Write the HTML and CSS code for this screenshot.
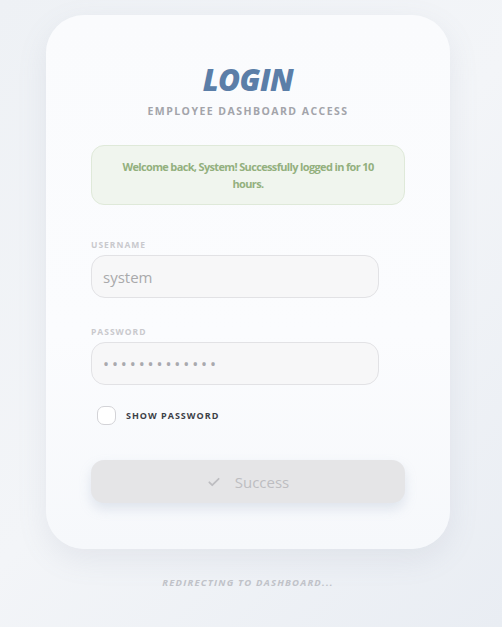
FILE: index.html
```html
<!DOCTYPE html>
<html lang="en">
<head>
    <meta charset="UTF-8">
    <meta name="viewport" content="width=device-width, initial-scale=1.0">
    <title>Login</title>
    <link rel="stylesheet" href="styles.css">
</head>
<body>
    <div class="login-card">
        <h1 class="title">LOGIN</h1>
        <div class="subtitle">EMPLOYEE DASHBOARD ACCESS</div>

        <div class="alert-success">
            Welcome back, System! Successfully logged in for 10 hours.
        </div>

        <div class="field">
            <label class="field-label" for="username">USERNAME</label>
            <input class="field-input" id="username" type="text" value="system">
        </div>

        <div class="field">
            <label class="field-label" for="password">PASSWORD</label>
            <input class="field-input password" id="password" type="password" value="system1234567">
        </div>

        <label class="show-password">
            <span class="checkbox"></span>
            SHOW PASSWORD
        </label>

        <button class="submit-button" disabled>
            <svg class="check-icon" width="14" height="14" viewBox="0 0 24 24">
                <path d="M4 12.5l5 5L20 6.5" fill="none" stroke="currentColor" stroke-width="3" stroke-linecap="round" stroke-linejoin="round"/>
            </svg>
            Success
        </button>
    </div>

    <div class="redirect-note">REDIRECTING TO DASHBOARD...</div>
</body>
</html>
```

FILE: styles.css
```css
body {
    margin: 0;
    min-height: 627px;
    font-family: "Open Sans", Arial, sans-serif;
    background: linear-gradient(135deg, #eef1f5 0%, #f3f5f8 50%, #e9edf3 100%);
    display: flex;
    flex-direction: column;
    align-items: center;
}

.login-card {
    width: 404px;
    box-sizing: border-box;
    margin-top: 15px;
    margin-left: -6px;
    padding: 52px 45px 46px;
    background: linear-gradient(180deg, #fafbfd 0%, #fbfcfe 60%, #f6f8fb 100%);
    border-radius: 38px;
    box-shadow: 0 10px 30px rgba(120, 135, 160, 0.12);
}

.title {
    margin: 0;
    text-align: center;
    font-size: 30px;
    font-weight: 800;
    font-style: italic;
    letter-spacing: -0.5px;
    line-height: 26px;
    color: #5b7ea8;
}

.subtitle {
    margin-top: 11px;
    text-align: center;
    font-size: 10.5px;
    font-weight: 700;
    letter-spacing: 1.45px;
    color: #a3a4aa;
}

.alert-success {
    margin-top: 27px;
    height: 60px;
    box-sizing: border-box;
    padding: 12px 20px;
    background: #f0f5ee;
    border: 1px solid #dfe9d9;
    border-radius: 13px;
    text-align: center;
    font-size: 11px;
    font-weight: 700;
    line-height: 17px;
    letter-spacing: -0.65px;
    color: #93b07e;
}

.field {
    margin-top: 34px;
}

.field + .field {
    margin-top: 28px;
}

.field-label {
    display: block;
    font-size: 8.5px;
    font-weight: 700;
    letter-spacing: 1px;
    color: #c9c9cd;
    margin-bottom: 5px;
}

.field-input {
    width: 288px;
    height: 43px;
    box-sizing: border-box;
    padding: 0 11px;
    font-family: "Open Sans", Arial, sans-serif;
    font-size: 15px;
    color: #a9a9ab;
    background: #f7f7f8;
    border: 1px solid #e2e2e5;
    border-radius: 14px;
    outline: none;
}

.field-input.password {
    font-size: 16px;
    letter-spacing: 2.9px;
    color: #a9a9ae;
}

.show-password {
    display: flex;
    align-items: center;
    gap: 10px;
    margin-top: 21px;
    margin-left: 6px;
    font-size: 9px;
    font-weight: 700;
    letter-spacing: 1px;
    color: #3c3f47;
}

.checkbox {
    width: 17px;
    height: 17px;
    border: 1px solid #d3d3d7;
    border-radius: 7px;
    background: #fff;
}

.submit-button {
    display: flex;
    align-items: center;
    justify-content: center;
    gap: 14px;
    width: 100%;
    height: 43px;
    margin-top: 35px;
    border: none;
    border-radius: 13px;
    background: #e5e5e7;
    box-shadow: 0 6px 12px rgba(160, 175, 200, 0.28);
    font-family: "Open Sans", Arial, sans-serif;
    font-size: 15px;
    color: #bdbdc1;
}

.check-icon {
    color: #bdbdc1;
}

.redirect-note {
    margin-top: 27px;
    margin-left: -6px;
    font-size: 9.5px;
    font-weight: 700;
    font-style: italic;
    letter-spacing: 1.2px;
    color: #c0c2c8;
}
```
